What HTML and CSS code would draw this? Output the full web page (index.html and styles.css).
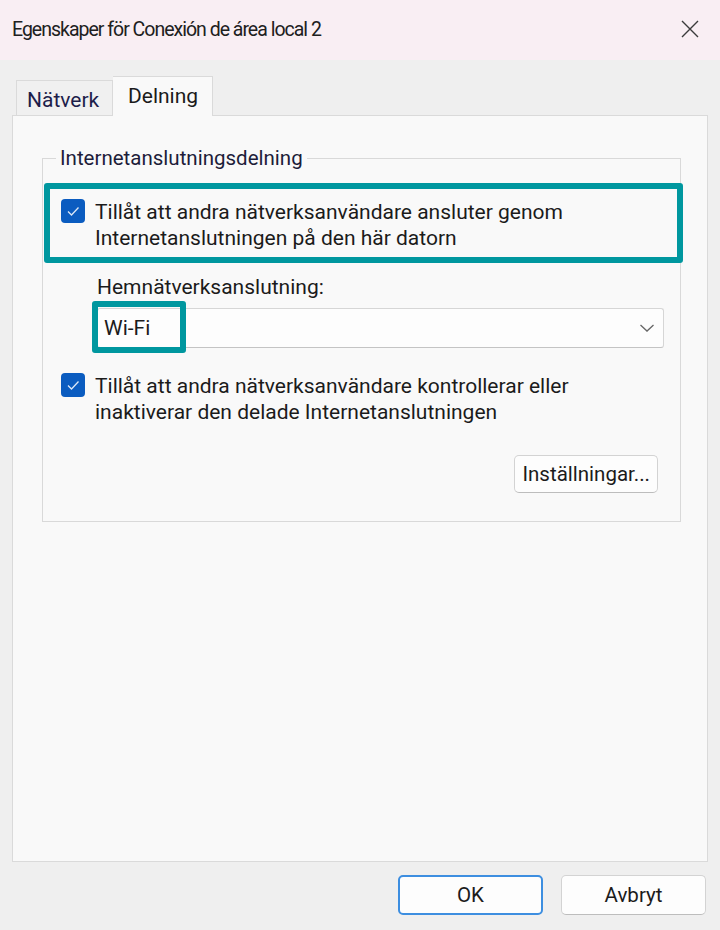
FILE: index.html
```html
<!DOCTYPE html>
<html lang="sv">
<head>
    <meta charset="UTF-8">
    <meta name="viewport" content="width=device-width, initial-scale=1.0">
    <title>Egenskaper för Conexión de área local 2</title>
    <link rel="stylesheet" href="styles.css">
</head>
<body>
    <div class="window">
        <!-- Titelrad -->
        <div class="titlebar">
            <span class="title">Egenskaper för Conexión de área local 2</span>
            <svg class="close" width="18" height="18" viewBox="0 0 18 18">
                <path d="M1 1 L17 17 M17 1 L1 17" stroke="#3b3b3b" stroke-width="1.4" fill="none"/>
            </svg>
        </div>

        <div class="content">
            <!-- Flikar -->
            <div class="tabs">
                <div class="tab">Nätverk</div>
                <div class="tab active">Delning</div>
            </div>

            <div class="panel">
                <fieldset class="group">
                    <legend>Internetanslutningsdelning</legend>

                    <div class="highlight">
                        <div class="check-row">
                            <span class="checkbox">
                                <svg width="24" height="24" viewBox="0 0 24 24">
                                    <path d="M7 12.5 L10.5 16 L17.5 8.5" stroke="#dce8f7" stroke-width="1.3" fill="none"/>
                                </svg>
                            </span>
                            <span>Tillåt att andra nätverksanvändare ansluter genom<br>Internetanslutningen på den här datorn</span>
                        </div>
                    </div>

                    <div class="field-label">Hemnätverksanslutning:</div>
                    <div class="select">
                        <span class="select-value">Wi-Fi</span>
                        <span class="wifi-mark"></span>
                        <svg class="chevron" width="16" height="10" viewBox="0 0 16 10">
                            <path d="M1.5 2 L8 8 L14.5 2" stroke="#666" stroke-width="1.3" fill="none"/>
                        </svg>
                    </div>

                    <div class="check-row second">
                        <span class="checkbox">
                            <svg width="24" height="24" viewBox="0 0 24 24">
                                <path d="M7 12.5 L10.5 16 L17.5 8.5" stroke="#dce8f7" stroke-width="1.3" fill="none"/>
                            </svg>
                        </span>
                        <span>Tillåt att andra nätverksanvändare kontrollerar eller<br>inaktiverar den delade Internetanslutningen</span>
                    </div>

                    <div class="settings-row">
                        <button class="btn">Inställningar...</button>
                    </div>
                </fieldset>
            </div>

            <!-- Knappar -->
            <div class="actions">
                <button class="btn btn-ok">OK</button>
                <button class="btn">Avbryt</button>
            </div>
        </div>
    </div>
</body>
</html>
```

FILE: styles.css
```css
body {
    margin: 0;
    font-family: Roboto, "Noto Sans", sans-serif;
    color: #1b1b1b;
    background: #efefef;
}
.window {
    width: 720px;
    height: 930px;
    display: flex;
    flex-direction: column;
}
.titlebar {
    height: 60px;
    background: #f9eef3;
    display: flex;
    align-items: center;
    justify-content: space-between;
    padding: 0 21px 0 12px;
    box-sizing: border-box;
}
.title {
    font-size: 19.5px;
    letter-spacing: -1px;
    color: #202020;
    margin-top: -1px;
}
.close {
    margin-top: -2px;
}
.content {
    flex: 1;
    background: #efefef;
    padding: 16px 12px 0 12px;
}
.tabs {
    display: flex;
    align-items: flex-end;
    padding-left: 4px;
    height: 39px;
}
.tab {
    font-size: 21px;
    height: 35px;
    line-height: 38px;
    padding: 0 10px;
    width: 97px;
    box-sizing: border-box;
    background: #f0f0f0;
    border: 1px solid #dadada;
    border-bottom: none;
    color: #1d1d4a;
}
.tab.active {
    height: 40px;
    line-height: 38px;
    width: 100px;
    padding-left: 15px;
    background: #f9f9f9;
    border-left: none;
    margin-bottom: -1px;
    position: relative;
    color: #1b1b1b;
}
.panel {
    width: 696px;
    height: 747px;
    box-sizing: border-box;
    background: #f9f9f9;
    border: 1px solid #dadada;
    padding: 29px 26px 0 29px;
}
.group {
    margin: 0;
    padding: 0 0 28px 0;
    border: 1px solid #d9d9d9;
    font-size: 21px;
    line-height: 26px;
}
.group legend {
    font-size: 20.5px;
    padding: 0 4px;
    margin-left: 13px;
    color: #1d1d3a;
}
.highlight {
    margin: 12px -3px 0 1px;
    border: 6px solid #00979f;
    border-radius: 3px;
    padding: 10px 11px 6px 11px;
}
.check-row {
    display: flex;
    align-items: flex-start;
    gap: 10px;
}
.check-row.second {
    margin: 25px 0 0 18px;
}
.checkbox {
    width: 24px;
    height: 24px;
    flex: none;
    border-radius: 4px;
    background: #0b5cc0;
    margin-top: 0;
}
.checkbox svg {
    display: block;
}
.field-label {
    margin: 11px 0 0 54px;
}
.select {
    position: relative;
    margin: 8px 16px 0 54px;
    height: 40px;
    box-sizing: border-box;
    background: #fdfdfd;
    border: 1px solid #d6d6d6;
    border-bottom-color: #c4c4c4;
    border-radius: 3px;
    display: flex;
    align-items: center;
    justify-content: space-between;
    padding: 0 8px 0 6px;
}
.wifi-mark {
    position: absolute;
    left: -6px;
    top: -8px;
    width: 94px;
    height: 52px;
    box-sizing: border-box;
    border: 6px solid #00979f;
    border-radius: 3px;
}
.settings-row {
    display: flex;
    justify-content: flex-end;
    margin: 30px 22px 0 0;
}
.btn {
    font-family: Roboto, "Noto Sans", sans-serif;
    font-size: 20.5px;
    color: #1b1b1b;
    background: #fdfdfd;
    border: 1px solid #d3d3d3;
    border-bottom-color: #bdbdbd;
    border-radius: 5px;
    height: 38px;
    padding: 0 7px;
    margin: 0;
}
.actions {
    display: flex;
    justify-content: flex-end;
    gap: 18px;
    padding: 13px 2px 0 0;
}
.actions .btn {
    width: 145px;
    height: 40px;
}
.actions .btn-ok {
    border: 2px solid #3d8ee0;
}
```
